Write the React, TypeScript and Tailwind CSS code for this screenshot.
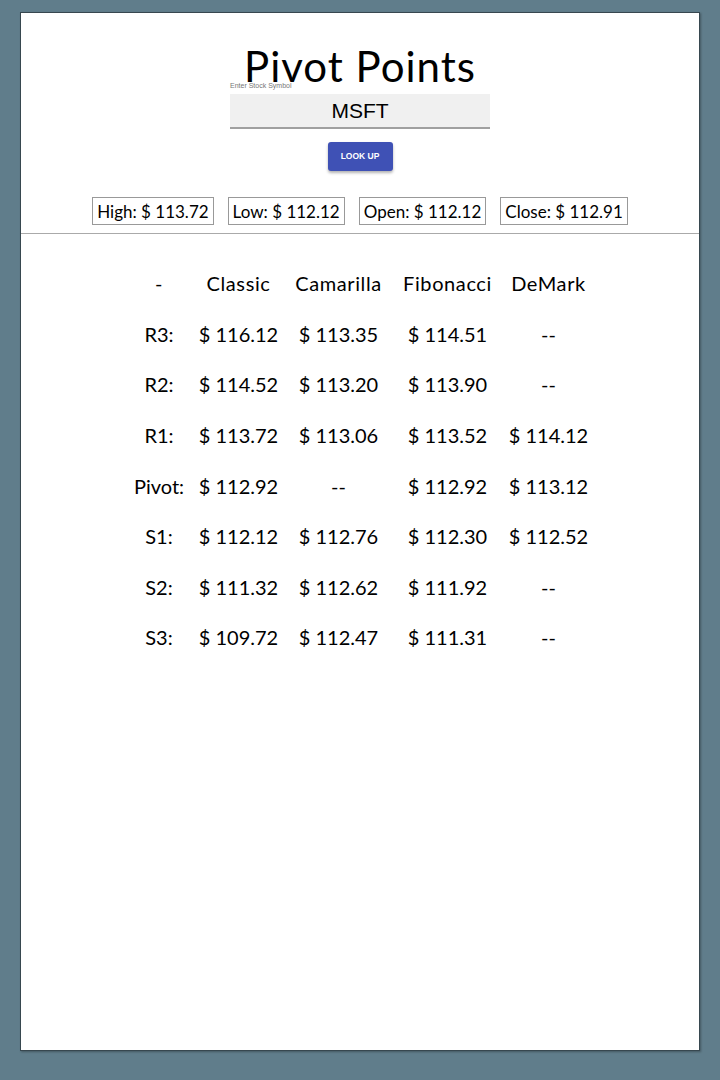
import React from "react";

const rows: [string, string, string, string, string][] = [
  ["R3:", "$ 116.12", "$ 113.35", "$ 114.51", "--"],
  ["R2:", "$ 114.52", "$ 113.20", "$ 113.90", "--"],
  ["R1:", "$ 113.72", "$ 113.06", "$ 113.52", "$ 114.12"],
  ["Pivot:", "$ 112.92", "--", "$ 112.92", "$ 113.12"],
  ["S1:", "$ 112.12", "$ 112.76", "$ 112.30", "$ 112.52"],
  ["S2:", "$ 111.32", "$ 112.62", "$ 111.92", "--"],
  ["S3:", "$ 109.72", "$ 112.47", "$ 111.31", "--"],
];

const font = { fontFamily: "Lato, 'Open Sans', sans-serif" };

export default function App() {
  return (
    <div className="min-h-[1080px] bg-[#607d8b] pt-[12px] px-[20px]">
      <div
        className="h-[1039px] w-[680px] border border-[#37474f] bg-white shadow-[1px_1px_2px_rgba(0,0,0,0.3)] flex flex-col items-center pt-[38px]"
        style={font}
      >
        <div className="text-[42px] leading-[30px] tracking-[1px] text-black">Pivot Points</div>
        <div className="w-[260px] mt-[1px]">
          <div className="text-[7px] leading-[8px] text-[#777] font-['Liberation_Sans',Arial,sans-serif]">
            Enter Stock Symbol
          </div>
          <div className="mt-[4px] h-[35px] bg-[#f0f0f0] border-b-2 border-[#a0a0a0] flex items-center justify-center text-[21px] text-black font-['Liberation_Sans',Arial,sans-serif]">
            MSFT
          </div>
        </div>
        <button className="mt-[13px] h-[29px] w-[65px] rounded-[3px] bg-[#3f51b5] text-white text-[8.5px] font-semibold font-['Liberation_Sans',Arial,sans-serif] shadow-[0_2px_3px_rgba(0,0,0,0.3)]">
          LOOK UP
        </button>
        <div className="mt-[26px] flex gap-[14px] text-[17px] text-black">
          {["High: $ 113.72", "Low: $ 112.12", "Open: $ 112.12", "Close: $ 112.91"].map((t) => (
            <div key={t} className="h-[28px] border border-[#999] px-[4px] flex items-center leading-none">
              {t}
            </div>
          ))}
        </div>
        <div className="mt-[8px] h-px w-full bg-[#aaa]" />
        <table className="mt-[24px] table-fixed border-collapse text-[20px] text-black">
          <colgroup>
            <col className="w-[67px]" />
            <col className="w-[92px]" />
            <col className="w-[108px]" />
            <col className="w-[110px]" />
            <col className="w-[92px]" />
          </colgroup>
          <thead>
            <tr className="h-[50.6px]">
              {["-", "Classic", "Camarilla", "Fibonacci", "DeMark"].map((h) => (
                <th key={h} className="font-normal text-center p-0 tracking-[0.6px]">
                  {h}
                </th>
              ))}
            </tr>
          </thead>
          <tbody>
            {rows.map((r) => (
              <tr key={r[0]} className="h-[50.6px]">
                {r.map((c, i) => (
                  <td key={i} className="text-center p-0 whitespace-nowrap">
                    {c}
                  </td>
                ))}
              </tr>
            ))}
          </tbody>
        </table>
      </div>
    </div>
  );
}
